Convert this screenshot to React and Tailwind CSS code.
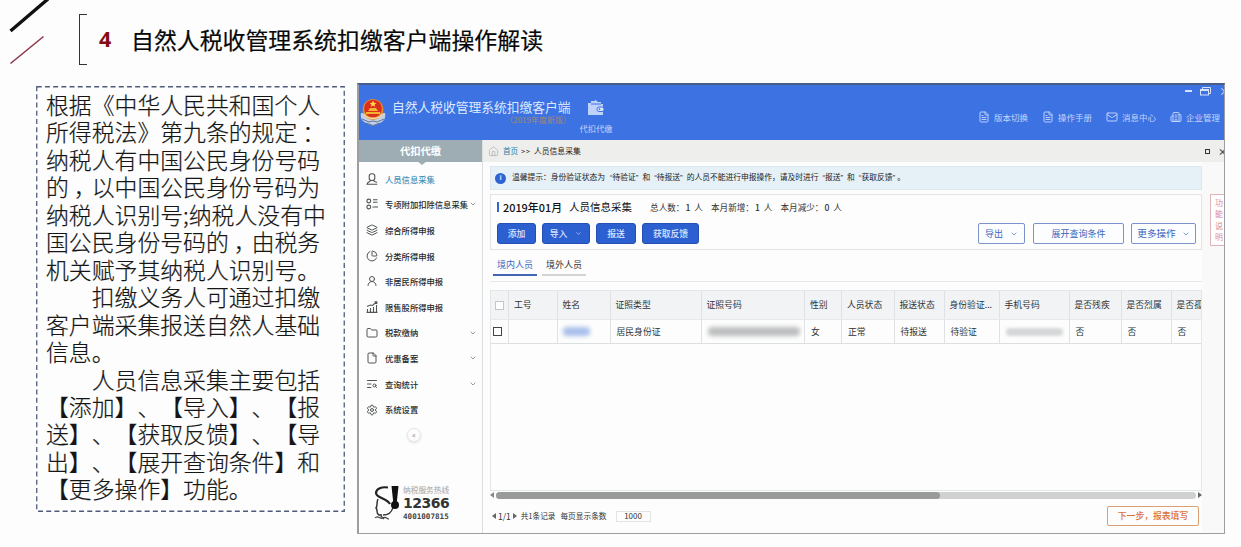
import React from "react";
import {
  ChevronDown, Layers, ChartPie, UserRound,
  Folder, File, Settings, House, FileText, Mail, Building2, TextSearch,
} from "lucide-react";

const noteLines = [
  "根据《中华人民共和国个人",
  "所得税法》第九条的规定：",
  "纳税人有中国公民身份号码",
  "的，以中国公民身份号码为",
  "纳税人识别号;纳税人没有中",
  "国公民身份号码的，由税务",
  "机关赋予其纳税人识别号。",
  "　　扣缴义务人可通过扣缴",
  "客户端采集报送自然人基础",
  "信息。",
  "　　人员信息采集主要包括",
  "【添加】、【导入】、【报",
  "送】、【获取反馈】、【导",
  "出】、【展开查询条件】和",
  "【更多操作】功能。",
];

function Bust({ size, className }) {
  return (
    <svg viewBox="0 0 12 12" width={size} height={size} className={className} fill="none" stroke="currentColor" strokeWidth="1.1">
      <rect x="3.200" y="0.700" width="5.600" height="6.800" rx="2.600" />
      <path d="M4.500 7.500C4 9 1.500 8.600 1 11.300h10.300M7.500 7.500c.3 1.200 2.500 1 3.500 2" />
    </svg>
  );
}

function Checklist({ size, className }) {
  return (
    <svg viewBox="0 0 12 12" width={size} height={size} className={className} fill="none" stroke="currentColor" strokeWidth="1.1">
      <circle cx="2.800" cy="3" r="1.900" />
      <circle cx="2.800" cy="9" r="1.900" />
      <path d="M7 1.800h4.500M7 4.200h4.500M6.500 9h5.500" />
    </svg>
  );
}

function Growth({ size, className }) {
  return (
    <svg viewBox="0 0 12 12" width={size} height={size} className={className} fill="none" stroke="currentColor" strokeWidth="1.1">
      <path d="M1.500 11V8M4.500 11V7M7.500 11V6M10.500 11V4M0.500 11.400h11M1 5.500l3.500-1.500 2 .5L10.500 1M8.500 0.800h2.300V3" />
    </svg>
  );
}

const menu = [
  { label: "人员信息采集", icon: Bust, active: true },
  { label: "专项附加扣除信息采集", icon: Checklist, more: true },
  { label: "综合所得申报", icon: Layers },
  { label: "分类所得申报", icon: ChartPie },
  { label: "非居民所得申报", icon: UserRound },
  { label: "限售股所得申报", icon: Growth },
  { label: "税款缴纳", icon: Folder, more: true },
  { label: "优惠备案", icon: File, more: true },
  { label: "查询统计", icon: TextSearch, more: true },
  { label: "系统设置", icon: Settings },
];

const columns = [
  { w: "w-[48.5px]", head: "工号", cell: "" },
  { w: "w-[53px]", head: "姓名", cell: <i className="-ml-px block h-[9px] w-[27px] rounded-sm bg-[#a9bfec] blur-[2px]" /> },
  { w: "w-[91px]", head: "证照类型", cell: "居民身份证" },
  { w: "w-[103.5px]", head: "证照号码", cell: <i className="block h-[9px] w-[92px] rounded-sm bg-[#bcbebf] blur-[2px]" /> },
  { w: "w-[37px]", head: "性别", cell: "女" },
  { w: "w-[52.5px]", head: "人员状态", cell: "正常" },
  { w: "w-[50px]", head: "报送状态", cell: "待报送" },
  { w: "w-[55px]", head: "身份验证...", cell: "待验证" },
  { w: "w-[70px]", head: "手机号码", cell: <i className="block h-[8px] w-[57px] rounded-sm bg-[#d5d7d8] blur-[1.5px]" /> },
  { w: "w-[52px]", head: "是否残疾", cell: "否" },
  { w: "w-[50px]", head: "是否烈属", cell: "否" },
  { w: "w-[50px]", head: "是否孤老", cell: "否" },
];

function Emblem() {
  return (
    <svg viewBox="0 0 26 29" className="h-[29px] w-[26px] shrink-0">
      <path d="M1 15c-1 5 1 8 5 10l7 3 7-3c4-2 6-5 5-10z" fill="#c3d0e6" />
      <path d="M2 21l7 3 4-1 4 1 7-3M6 25l7 2.500 7-2.500" fill="none" stroke="#63749c" strokeWidth="1" />
      <circle cx="13" cy="11.500" r="10.500" fill="#e08a32" />
      <circle cx="13" cy="10.500" r="8.800" fill="#dd2d1c" />
      <path d="M13 2.500l1 2.200 2.400.2-1.800 1.600.6 2.300L13 7.500l-2.200 1.300.6-2.300-1.800-1.600 2.400-.2z" fill="#ffd84a" />
      <path d="M8 13h10l-2-3h-6zM6 16h14v-2H6z" fill="#f8b431" />
      <path d="M4 16c3 6 15 6 18 0" fill="none" stroke="#f2d9a4" strokeWidth="1.500" />
    </svg>
  );
}

function Wallet() {
  return (
    <svg viewBox="0 0 18 17" className="h-[17px] w-[18px]">
      <path d="M1 4h3V2h4V0.500l3 2.500h3v2h2v11H1z" fill="#bed2fa" />
      <path d="M4 5h10" stroke="#3d70df" strokeWidth="1" />
      <rect x="10" y="8" width="7" height="4.500" rx="2" fill="#dfe9ff" stroke="#3d70df" />
      <circle cx="12.500" cy="10.200" r="0.900" fill="#3d70df" />
    </svg>
  );
}

function HotlineMark() {
  return (
    <svg viewBox="0 0 26 36" className="h-[36px] w-[26px]">
      <path d="M14 2.500C8 1.500 2 3.500 2 8c0 5 11 5 14 11" fill="none" stroke="#222" strokeWidth="2.200" />
      <path d="M19 22c-1 5-5 8-10 8" fill="none" stroke="#333" strokeWidth="1.300" />
      <path d="M4 14c-2 4 0 6-2 9 1 1 1 1 1 3s0 3 2 4h3" fill="none" stroke="#333" strokeWidth="1.500" />
      <path d="M1 33c3-4 5 2 8 0s4 1 6 1M6 30l4 4" fill="none" stroke="#444" strokeWidth="1.200" />
      <path d="M17.500 1h7l-1.700 16h-3.600z" fill="#111" />
      <circle cx="21" cy="20" r="4" fill="#111" />
    </svg>
  );
}

function Solid({ w, children }) {
  return (
    <button className={"flex h-[21px] items-center justify-center rounded-[3px] border border-[#2450b4] bg-[#2c60d0] text-[8.8px] font-medium text-[#dce7ff] " + w}>
      {children}
    </button>
  );
}

function Outline({ w, children }) {
  return (
    <button className={"flex h-[21px] items-center justify-center rounded-[2px] border border-[#7c92cb] bg-[#fcfdff] text-[9px] text-[#3c64bb] " + w}>
      {children}
    </button>
  );
}

function TopLink({ icon: Icon, children, w }) {
  return (
    <span className={"flex shrink-0 items-center gap-[4px] text-[#c3d5fb] " + w}>
      <Icon size={12} strokeWidth={1.9} />
      <span className="text-[8.5px]">{children}</span>
    </span>
  );
}

function Sidebar() {
  return (
    <aside className="flex w-[124px] shrink-0 flex-col border-r border-[#dcdedf]">
      <div className="relative flex h-[22px] items-center justify-center bg-[#9dadb3] text-[10.3px] font-bold text-white">
        代扣代缴
        <span className="absolute top-[21px] left-[58px] h-0 w-0 border-x-[5px] border-t-[4px] border-x-transparent border-t-[#9dadb3]" />
      </div>
      <nav className="flex flex-col pt-[4px]">
        {menu.map(({ label, icon: Icon, active, more }) => (
          <div key={label} className={"flex h-[25.65px] items-center pl-[7px] " + (active ? "text-[#428fb8]" : "text-[#26292b]")}>
            <Icon size={12} strokeWidth={2} className="shrink-0 text-[#505455]" />
            <span className="ml-[7px] shrink-0 text-[8.3px] font-medium">{label}</span>
            {more && <ChevronDown size={8} className="mr-[5px] ml-auto shrink-0 text-[#666]" />}
          </div>
        ))}
      </nav>
      <div className="mt-[6px] ml-[48px] flex h-[14px] w-[14px] items-center justify-center rounded-full border border-[#e4e6e6] text-[8px] leading-none text-[#888] shadow-sm">
        «
      </div>
      <div className="mt-auto mb-[12px] flex items-center pl-[15px]">
        <HotlineMark />
        <div className="ml-[3px] flex flex-col">
          <span className="text-[7.7px] leading-[9px] text-[#a2a4a4]">纳税服务热线</span>
          <span className="font-['DejaVu_Sans'] text-[14px] leading-[18px] font-bold tracking-[-0.5px] text-[#333]">12366</span>
          <span className="font-['DejaVu_Sans_Mono'] text-[7.6px] leading-[9px] font-bold text-[#444]">4001007815</span>
        </div>
      </div>
    </aside>
  );
}

function People() {
  return (
    <div className="mt-[8px] flex h-[201px] w-[712px] flex-col overflow-hidden border border-[#e4e7e8] text-[8.8px] text-[#2f3335]">
      <div className="flex h-[29px] shrink-0 border-b border-[#e6e9ea] bg-[#f1f3f5]">
        <div className="flex w-[18px] shrink-0 items-center justify-center border-r border-[#dfe2e4]">
          <span className="h-[9px] w-[9px] border border-[#c4c7c8] bg-white" />
        </div>
        {columns.map((c) => (
          <div key={c.head} className={"flex shrink-0 items-center overflow-hidden border-r border-[#dfe2e4] pl-[5px] whitespace-nowrap " + c.w}>{c.head}</div>
        ))}
      </div>
      <div className="flex h-[24px] shrink-0 border-b border-[#dcdfe0]">
        <div className="flex w-[18px] shrink-0 items-center border-r border-[#dfe2e4] pl-[2px]">
          <span className="h-[9px] w-[9px] border border-[#444] bg-white" />
        </div>
        {columns.map((c) => (
          <div key={c.head} className={"flex shrink-0 items-center overflow-hidden border-r border-[#dfe2e4] pl-[6px] whitespace-nowrap " + c.w}>{c.cell}</div>
        ))}
      </div>
    </div>
  );
}

function Content() {
  return (
    <main className="flex min-w-0 flex-1 flex-col">
      <div className="flex h-[22px] shrink-0 items-center bg-[#eeeeed] pl-[5px] text-[8px] text-[#222]">
        <House size={11} strokeWidth={1.5} className="text-[#aaa]" />
        <span className="ml-[4px] text-[7.6px] text-[#2680a8]">首页</span>
        <span className="mx-[3px] text-[7px] tracking-[1px]">&gt;&gt;</span>
        <span className="text-[7.8px]">人员信息采集</span>
        <span className="mt-px mr-[8px] ml-auto h-[5px] w-[5px] border-[1.5px] border-[#333]" />
        <span className="w-[6px] text-[9px] leading-none font-bold text-[#444]">×</span>
      </div>
      <div className="flex min-h-0 flex-1">
        <div className="flex w-[719px] shrink-0 flex-col pl-[7px]">
          <div className="mt-[4px] flex h-[24px] shrink-0 items-center border border-[#dce8ee] bg-[#e5f0f7] pl-[4px] text-[#222]">
            <span className="flex h-[11px] w-[11px] items-center justify-center rounded-full bg-[#2f65d0] font-['Liberation_Sans'] text-[8px] font-bold text-[#cfe0ff]">i</span>
            <span className="ml-[6px] flex font-['Liberation_Sans','Noto_Sans_CJK_SC',sans-serif] text-[7.75px]">
              温馨提示：身份验证状态为<span className="ml-[5px]">“待验证”</span><span className="mx-[4px]">和</span>“待报送”<span className="ml-[4px]">的人员不能进行申报操作，请及时进行</span><span className="ml-[4px]">“报送”</span><span className="mx-[4px]">和</span>“获取反馈” 。
            </span>
          </div>
          <section className="mt-[4px] flex h-[56px] shrink-0 flex-col border border-[#e2e4e4]">
            <div className="flex h-[24px] items-center pl-[6px]">
              <span className="h-[10px] w-[2px] bg-[#3566c8]" />
              <span className="ml-[4px] text-[10.9px] font-medium text-[#111]">2019年01月</span>
              <span className="ml-[7px] text-[10.5px] text-[#111]">人员信息采集</span>
              <span className="ml-[18px] flex gap-[8px] text-[8.6px] text-[#333]">
                <span>总人数：<b className="mr-[4px] ml-px font-medium">1</b>人</span>
                <span>本月新增：<b className="mr-[4px] ml-px font-medium">1</b>人</span>
                <span>本月减少：<b className="mr-[4px] ml-px font-medium">0</b>人</span>
              </span>
            </div>
            <div className="mt-[4px] flex items-center pr-[5px] pl-[6px]">
              <Solid w="w-[39px]">添加</Solid>
              <Solid w="ml-[6px] w-[48px]"><span className="mr-[8px]">导入</span><ChevronDown size={7} /></Solid>
              <Solid w="ml-[6px] w-[40px]">报送</Solid>
              <Solid w="ml-[6px] w-[57px]">获取反馈</Solid>
              <Outline w="ml-auto w-[47px]"><span className="mr-[7px]">导出</span><ChevronDown size={8} /></Outline>
              <Outline w="ml-[8px] w-[91px]">展开查询条件</Outline>
              <Outline w="ml-[7px] w-[65px]"><span className="mr-[6px] text-[9.6px]">更多操作</span><ChevronDown size={8} /></Outline>
            </div>
          </section>
          <div className="flex h-[32px] shrink-0 gap-[5px] border-b border-[#e6e8e8] pl-[3px] text-[9px]">
            <span className="mt-[5px] flex h-[21px] w-[44px] items-center justify-center border-b-2 border-[#4166b4] text-[#3c68c4]">境内人员</span>
            <span className="mt-[5px] flex h-[21px] w-[44px] items-center justify-center border-b-2 border-[#d3d5d5] text-[#333]">境外人员</span>
          </div>
          <People />
          <div className="flex h-[8px] shrink-0 items-center">
            <span className="h-0 w-0 border-y-[3px] border-r-[4px] border-y-transparent border-r-[#888]" />
            <span className="ml-[2px] flex h-[7px] flex-1 rounded-full bg-[#d0d1d1]">
              <span className="w-[444px] rounded-full bg-[#999b9b]" />
            </span>
            <span className="ml-[2px] h-0 w-0 border-y-[3px] border-l-[4px] border-y-transparent border-l-[#666]" />
          </div>
          <div className="flex flex-1 items-center pl-[2px] text-[8px] text-[#333]">
            <span className="h-0 w-0 border-y-[3px] border-r-[4px] border-y-transparent border-r-[#666]" />
            <span className="mx-[2px] text-[8.5px]">1/1</span>
            <span className="h-0 w-0 border-y-[3px] border-l-[4px] border-y-transparent border-l-[#666]" />
            <span className="ml-[4px] text-[7.6px]">共1条记录</span>
            <span className="ml-[5px] text-[7.7px]">每页显示条数</span>
            <span className="ml-[9px] flex h-[11px] w-[35px] items-center justify-center border border-[#e2e4e4] text-[8px]">1000</span>
            <button className="mr-[3px] ml-auto flex h-[20px] w-[92px] items-center justify-center rounded-[2px] border border-[#d8a074] text-[8.8px] font-medium text-[#d9703a]">下一步，报表填写</button>
          </div>
        </div>
        <div className="flex flex-1 flex-col bg-[#f8f9f8] pl-[8px]">
          <div className="mt-[32px] flex h-[52px] flex-col items-start overflow-hidden border border-r-0 border-[#dfb4bb] bg-white pt-[2px] pl-[4px] text-[8px] leading-[11.3px] text-[#d98b98]">
            <span>功</span><span>能</span><span>说</span><span>明</span>
          </div>
        </div>
      </div>
    </main>
  );
}

export default function App() {
  return (
    <div lang="zh-CN" className="flex h-[547px] w-[1241px] flex-col overflow-hidden bg-[#fcfdfc] font-['Noto_Sans_CJK_SC',sans-serif] whitespace-nowrap">
      <header className="flex h-[83px] shrink-0">
        <svg viewBox="0 0 79 83" className="h-[83px] w-[79px]">
          <path d="M10.500 31L48-1" stroke="#111" strokeWidth="3.400" />
          <path d="M10.500 63.500L43.500 36.500" stroke="#8c3448" strokeWidth="1.500" />
        </svg>
        <div className="mt-[14px] h-[51px] w-[8px] border-y border-l border-[#333]" />
        <div className="mt-[14px] flex h-[51px] items-center">
          <span className="ml-[12px] w-[32px] font-['Open_Sans'] text-[21.5px] font-bold text-[#840c14]">4</span>
          <h1 className="text-[22.9px] font-normal text-[#080808] [-webkit-text-stroke:0.2px]">自然人税收管理系统扣缴客户端操作解读</h1>
        </div>
      </header>
      <div className="flex flex-1 items-start">
        <section className="mt-[3px] ml-[36px] h-[426px] w-[309px] shrink-0">
          <svg className="absolute h-[426px] w-[309px]">
            <rect x="0.750" y="0.750" width="307.500" height="424.500" fill="none" stroke="#4e5b7c" strokeWidth="1.300" strokeDasharray="5 3.200" />
          </svg>
          <div className="pt-[5px] pl-[10px] text-[22.85px] leading-[27.45px] font-light text-[#151515] [-webkit-text-stroke:0.2px] [text-spacing-trim:space-all]">
            {noteLines.map((line) => (
              <p key={line}>
                {line.split(/([，：])/).map((part, i) =>
                  i % 2 ? <span key={i} className="inline-block translate-x-[5px]">{part}</span> : part
                )}
              </p>
            ))}
          </div>
        </section>
        <section className="ml-[12px] flex h-[451px] w-[868px] shrink-0 flex-col overflow-hidden border-2 border-t-2 border-r-[1.5px] border-b-[1.5px] border-[#9b9fa1] border-t-[#4a5d86]">
          <div className="flex h-[55px] shrink-0 bg-[#3d72e2]">
            <div className="flex items-center pl-[1px]"><Emblem /></div>
            <div className="ml-[6px] flex w-[179px] flex-col pt-[13px]">
              <span className="text-[12.75px] leading-[18px] text-[#dce8ff]">自然人税收管理系统扣缴客户端</span>
              <span className="-mt-px self-end text-[8px] leading-[9px] text-[#a08a6c]">（2019年度新版）</span>
            </div>
            <div className="ml-[5px] flex w-[40px] flex-col items-center pt-[14px]">
              <Wallet />
              <span className="mt-[6px] text-[8.2px] leading-[12px] text-[#c4d6fd]">代扣代缴</span>
            </div>
            <div className="ml-auto flex w-[246px] shrink-0 flex-col">
              <div className="flex h-[12px] items-center justify-end gap-[8px] text-[#d6e3ff]">
                <span className="h-[1.5px] w-[7px] bg-[#d6e3ff]" />
                <svg viewBox="0 0 11 9" className="h-[9px] w-[11px]" fill="none" stroke="#d6e3ff">
                  <path d="M2.500 2V0.500h8v6H9" />
                  <rect x="0.500" y="2.500" width="8" height="5.500" />
                  <path d="M0.500 3.500h8" />
                </svg>
                <span className="w-[5px] overflow-hidden text-[11px] leading-none">×</span>
              </div>
              <div className="mt-[14px] flex">
                <TopLink icon={FileText} w="w-[64px]">版本切换</TopLink>
                <TopLink icon={FileText} w="w-[64px]">操作手册</TopLink>
                <TopLink icon={Mail} w="w-[64px]">消息中心</TopLink>
                <TopLink icon={Building2} w="w-[52px]">企业管理</TopLink>
              </div>
            </div>
          </div>
          <div className="flex min-h-0 flex-1">
            <Sidebar />
            <Content />
          </div>
        </section>
      </div>
    </div>
  );
}
